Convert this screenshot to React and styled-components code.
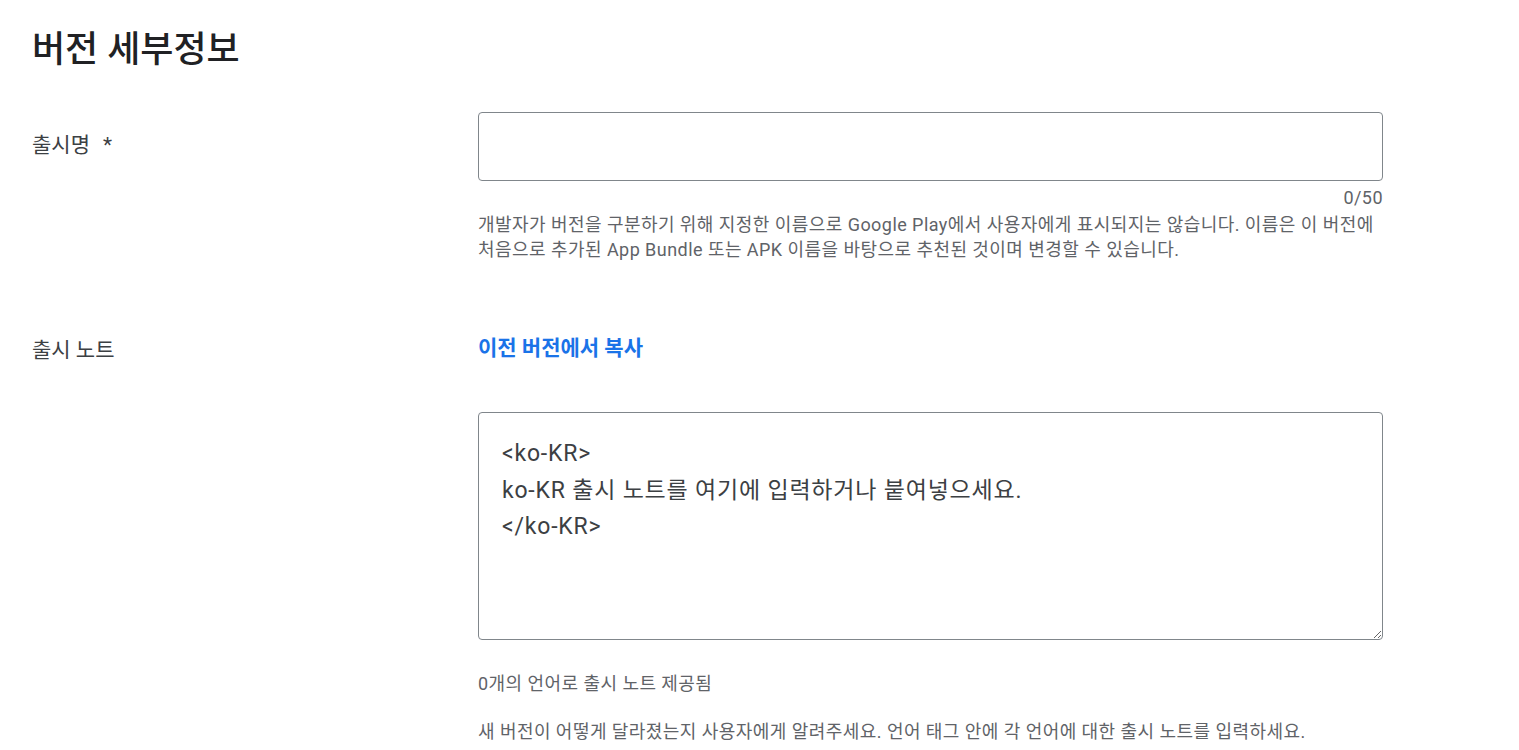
import React from "react";
import styled, { createGlobalStyle } from "styled-components";

const Global = createGlobalStyle`
  html, body { margin: 0; padding: 0; background: #fff; }
  body { font-family: Roboto, "Noto Sans CJK KR", sans-serif; color: #202124; }
  * { box-sizing: border-box; }
`;

const Page = styled.div`
  padding: 26px 32px 0 32px;
`;

const Title = styled.h1`
  margin: 0 0 38px 0;
  font-size: 36px;
  line-height: 48px;
  font-weight: 500;
  color: #202124;
`;

const Row = styled.div`
  display: grid;
  grid-template-columns: 446px 905px;
  margin-bottom: ${(p) => p.$mb || 0}px;
`;

const Label = styled.div`
  font-size: 21px;
  line-height: 28px;
  color: #3c4043;
  padding-top: ${(p) => p.$pt || 0}px;
  display: flex;
  gap: 13px;
`;

const Field = styled.div`
  display: flex;
  flex-direction: column;
`;

const TextInput = styled.input`
  width: 100%;
  height: 69px;
  border: 1px solid #80868b;
  border-radius: 4px;
  padding: 0 16px;
  font-family: inherit;
  font-size: 20px;
  outline: none;
`;

const Counter = styled.div`
  align-self: flex-end;
  font-size: 18px;
  line-height: 20px;
  letter-spacing: 0.45px;
  margin-top: 7px;
  color: #5f6368;
`;

const Help = styled.div`
  font-size: 18px;
  line-height: 25px;
  letter-spacing: 0.45px;
  color: #5f6368;
  margin-top: ${(p) => p.$mt || 0}px;
`;

const Link = styled.a`
  font-size: 21px;
  line-height: 24px;
  font-weight: 700;
  color: #1a73e8;
  text-decoration: none;
  cursor: pointer;
`;

const Notes = styled.textarea`
  width: 100%;
  height: 228px;
  margin-top: ${(p) => p.$mt || 0}px;
  border: 1px solid #80868b;
  border-radius: 4px;
  padding: 23px 23px;
  font-family: inherit;
  font-size: 23px;
  letter-spacing: 0.8px;
  line-height: 36.5px;
  color: #3c4043;
  resize: vertical;
  outline: none;
  display: block;
`;

export default function App() {
  return (
    <>
      <Global />
      <Page>
        <Title>버전 세부정보</Title>
        <Row $mb={74}>
          <Label $pt={19}>
            <span>출시명</span>
            <span>*</span>
          </Label>
          <Field>
            <TextInput />
            <Counter>0/50</Counter>
            <Help $mt={4}>
              개발자가 버전을 구분하기 위해 지정한 이름으로 Google Play에서 사용자에게 표시되지는 않습니다. 이름은 이 버전에
              <br />
              처음으로 추가된 App Bundle 또는 APK 이름을 바탕으로 추천된 것이며 변경할 수 있습니다.
            </Help>
          </Field>
        </Row>
        <Row>
          <Label>출시 노트</Label>
          <Field>
            <Link>이전 버전에서 복사</Link>
            <Notes
              $mt={52}
              defaultValue={"<ko-KR>\nko-KR 출시 노트를 여기에 입력하거나 붙여넣으세요.\n</ko-KR>"}
            />
            <Help $mt={31}>0개의 언어로 출시 노트 제공됨</Help>
            <Help $mt={23}>
              새 버전이 어떻게 달라졌는지 사용자에게 알려주세요. 언어 태그 안에 각 언어에 대한 출시 노트를 입력하세요.
            </Help>
          </Field>
        </Row>
      </Page>
    </>
  );
}
